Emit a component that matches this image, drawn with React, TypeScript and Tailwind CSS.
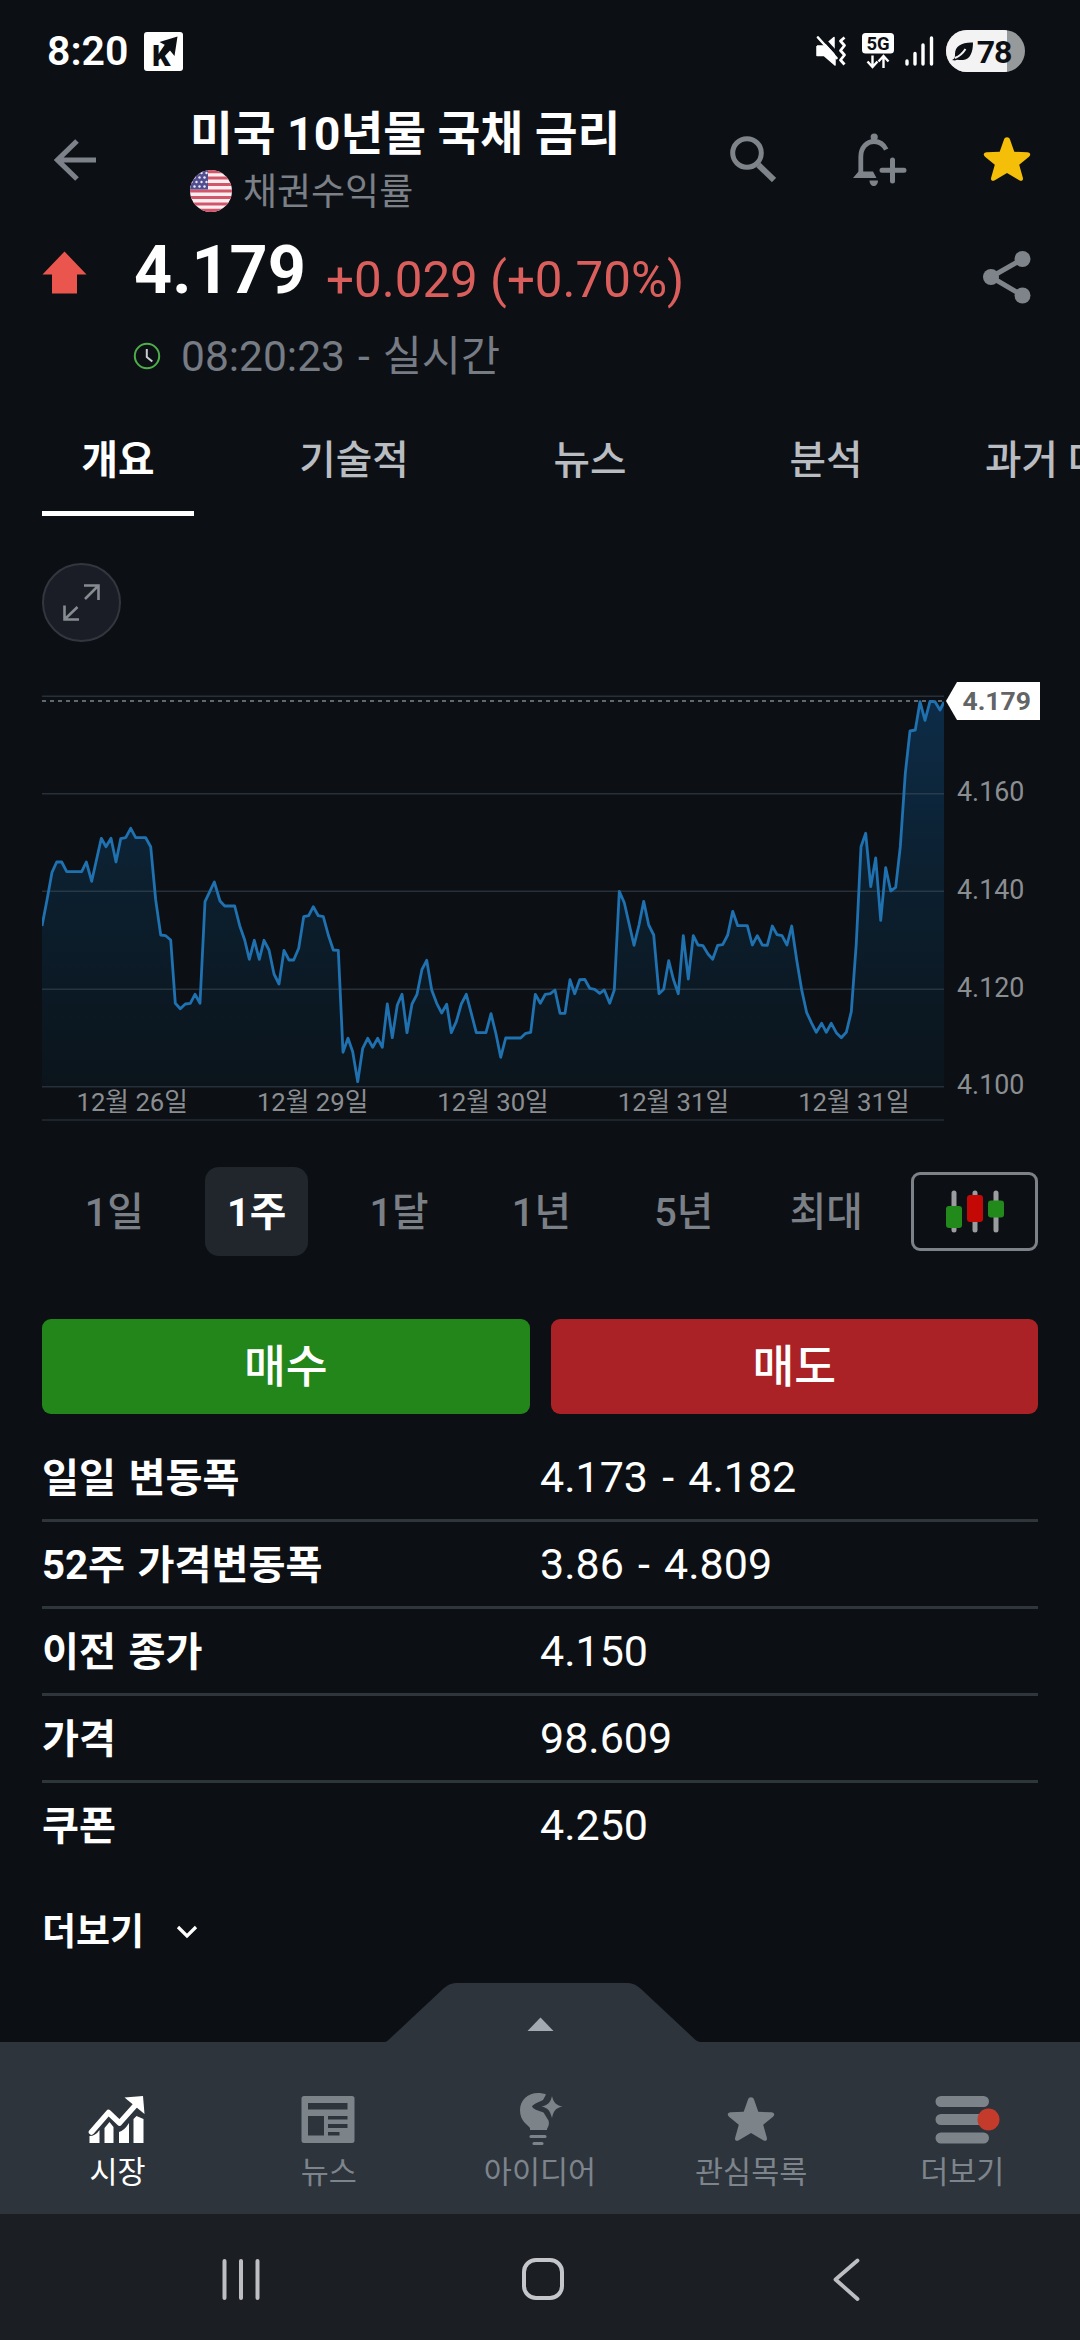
import type { ReactNode } from "react";

/* Price series for the week, in plot pixels (origin 42, 682). */
const SERIES: [number, number][] = [
  [42, 926], [47, 900], [52, 872.3], [56.7, 862], [61.7, 862], [66.7, 871.7], [81.7, 871.7], [86.3, 862], [91.7, 881.3],
  [101.3, 838.3], [106, 846.7], [111, 838.3], [116, 862], [120.7, 838.7], [125.7, 837.7], [130.7, 828.3], [135.7, 837.7],
  [145.7, 837.7], [150.7, 846.7], [155.7, 900], [160.7, 935], [165.7, 935.7], [170.7, 940], [175.3, 1003.3], [180.3, 1008.7],
  [185.3, 1004], [190.3, 1003.3], [195, 994.3], [200, 1003.3], [205, 901.7], [214.3, 882], [220, 901], [224.7, 906],
  [234.7, 906], [239.7, 925.7], [244.7, 940], [249.3, 959.3], [254.3, 940.3], [259.3, 959.3], [264, 940.3], [269, 950],
  [274, 974], [279, 984], [284, 950.3], [289, 960], [293.7, 960], [298.7, 948.3], [303.7, 916.7], [308.7, 915.7],
  [313.3, 906.7], [318.3, 915.7], [323.3, 916.7], [328.3, 935], [333.3, 950], [338.3, 950.3], [343, 1052.3], [348, 1038.3],
  [352.7, 1051.7], [357.7, 1081.7], [362.7, 1048.3], [367.7, 1038.3], [372.7, 1047.3], [377.7, 1038.3], [382.3, 1047.3],
  [387.3, 1004], [392.3, 1037.7], [397.3, 1005], [402, 994.3], [407, 1032.7], [412, 1004], [417, 994.3], [422, 969.3],
  [426.7, 960.3], [431.7, 990], [436.7, 1003.3], [441.7, 1013], [446.7, 1004.3], [451.3, 1032.7], [456.3, 1021.7],
  [461.3, 1004], [466.3, 994.3], [471.3, 1013.3], [476.3, 1032.7], [486, 1032.7], [491, 1013.7], [496, 1034], [500.7, 1057.3],
  [505.7, 1038], [520.7, 1038], [525.7, 1033.3], [530.7, 1032.3], [535.3, 994.3], [540.3, 1003.3], [545.3, 994.3],
  [550.3, 993.7], [555, 990], [560, 1013.3], [565, 1013.3], [570, 979.7], [574.7, 993.7], [579.7, 979.7], [584.7, 979.3],
  [589.7, 988.3], [594.7, 989.3], [599.7, 993.3], [604.3, 990], [609.7, 1003.3], [614.3, 990], [619.3, 891.3], [624.3, 902.7],
  [634, 945.3], [639, 925], [643.7, 901.3], [648.7, 925], [653.7, 935], [659, 993.7], [663.7, 989.3], [668.7, 960.7],
  [673.3, 979], [678.3, 993.7], [683.3, 935.7], [688.3, 979], [693.3, 935.7], [698, 945], [703, 945.7], [708, 954],
  [712.7, 959.3], [717.7, 945.3], [722.7, 944.7], [727.7, 935], [732.7, 911.3], [737.7, 925.7], [747.3, 925.7], [752.3, 945],
  [757.3, 935.7], [762.3, 945], [767.3, 945.3], [772.3, 926], [777, 934.7], [782, 935.7], [787, 945], [791.7, 926],
  [796.7, 960], [801.7, 990], [806.7, 1012.7], [811.7, 1023.3], [816.3, 1032.3], [821.7, 1023.3], [826.3, 1032.3],
  [831.3, 1023.3], [836.3, 1032.7], [841.3, 1037.7], [846.3, 1032.3], [851.3, 1011.7], [856.3, 943.3], [861, 846.7],
  [865.7, 833.3], [870.7, 886.7], [875.7, 858], [880.7, 920.3], [885.7, 867.7], [890.7, 891], [895.7, 887.3], [900.3, 846.7],
  [905.3, 773.3], [910, 731], [915.3, 730], [920, 701.7], [925, 720.3], [930, 701.3], [935, 701.7], [940, 710], [944, 702],
];
const LINE = SERIES.map(([x, y], i) => `${i ? "L" : "M"}${x} ${y}`).join("");
const AREA = `${LINE}V1086.5H42Z`;

const STAR =
  "M24 1.2c1.4 0 2.5.9 3 2.300l4.300 12.300 13 .5c3 .1 4 2.600 1.700 4.500l-9.800 8 3.600 12.700c.8 2.800-1.200 4.300-3.600 2.700L24 36.900 11.800 44.200c-2.400 1.600-4.400.1-3.600-2.700l3.600-12.700-9.800-8c-2.300-1.900-1.300-4.400 1.700-4.500l13-.5L21 3.500c.5-1.400 1.600-2.300 3-2.300z";

function StatusBar() {
  return (
    <div className="flex h-[100px] shrink-0 items-start justify-between pl-[47px] pr-[55px] pt-[30px]">
      <div className="flex h-[42px] items-center gap-[16px]">
        <span className="text-[41px] font-semibold leading-[42px] text-white">8:20</span>
        <svg className="h-[39px] w-[39px] overflow-visible" viewBox="0 0 39 39">
          <rect width="39" height="39" rx="3" fill="#fff" />
          <text x="8" y="34" fontFamily="Roboto" fontWeight="900" fontSize="29" fill="#0c1015">K</text>
          <path d="M33.500 4.500 30.500 24 26 18.500 19 26 15.500 21 21 13 15.500 10z" fill="#0c1015" />
        </svg>
      </div>
      <div className="flex h-[42px] items-center">
        <svg className="mr-[15px] h-[30px] w-[31px]" viewBox="0 0 31 30">
          <path d="M1 10h7l10-8.500V18M1 10v9.500h7L19 29V20" fill="#fff" stroke="#fff" strokeWidth="1.500" strokeLinejoin="round" />
          <path d="M8 10 18 2v17H8zM1 10h8v9.500H1zM8 19 19 29V18z" fill="#fff" />
          <path d="M2-3 25 22" stroke="#0c1015" strokeWidth="3.500" />
          <path d="M2 1.500 20.500 22" stroke="#fff" strokeWidth="2.600" strokeLinecap="round" />
          <path d="M28.500 1.500l-4 3.500 4 4.500-4 5 4 4.500-4 5 4 4.500" fill="none" stroke="#fff" strokeWidth="2.800" strokeLinejoin="round" />
        </svg>
        <svg className="mr-[11px] h-[36px] w-[32px]" viewBox="0 0 32 36">
          <rect width="32" height="20.500" rx="3.500" fill="#fff" />
          <text x="16" y="16.500" textAnchor="middle" fontFamily="Roboto" fontWeight="700" fontSize="18.500" fill="#0c1015">5G</text>
          <path d="M10.500 22.500v11M5.500 28.500l5 5.500 5-5.500M21.500 35V23.500M16.500 28.500l5-5.500 5 5.500" fill="none" stroke="#fff" strokeWidth="2.400" />
        </svg>
        <svg className="mr-[12px] h-[30px] w-[29px]" viewBox="0 0 29 30">
          <path d="M2 25v3M10 17.500V28M18 9v19M26.500 2v26" stroke="#fff" strokeWidth="3.400" strokeLinecap="round" />
        </svg>
        <svg className="h-[42px] w-[79px]" viewBox="0 0 79 42">
          <clipPath id="cell"><rect width="79" height="42" rx="21" /></clipPath>
          <g clipPath="url(#cell)">
            <rect width="79" height="42" fill="#979a9b" />
            <rect width="61" height="42" fill="#f3f3f3" />
          </g>
          <path d="M6 30c3-1 3-3 3-6 0-8 7-12 18-11.500 0 10-3 17-10 17.500-4 .3-6-1-8 .500z" fill="#0c1015" />
          <path d="M9 28c5-2 8-5 10.500-9" stroke="#f3f3f3" strokeWidth="2" fill="none" />
          <text x="48" y="33" textAnchor="middle" fontFamily="Roboto" fontWeight="700" fontSize="32" letterSpacing="-1" fill="#0c1015">78</text>
        </svg>
      </div>
    </div>
  );
}

function Flag() {
  return (
    <svg className="h-[42px] w-[42px]" viewBox="0 0 42 42">
      <clipPath id="disc"><circle cx="21" cy="21" r="21" /></clipPath>
      <g clipPath="url(#disc)">
        <rect width="42" height="42" fill="#fbeef0" />
        <path d="M0 1.600h42M0 8h42M0 14.500h42M0 21h42M0 27.500h42M0 34h42M0 40.400h42" stroke="#d2566a" strokeWidth="3.200" />
        <rect width="18" height="19.500" fill="#514e90" />
        <g fill="#eceaf6">
          {[3, 7.500, 12, 16.500].map((y, r) =>
            [1.500, 6.500, 11.500, 16.500].map((x) => <circle key={`${x}-${y}`} cx={x + (r % 2 ? -2 : 0)} cy={y} r="1.200" />),
          )}
        </g>
      </g>
    </svg>
  );
}

function Header() {
  return (
    <div className="flex h-[136px] shrink-0">
      <div className="w-[190px] pl-[54px] pt-[39px]">
        <svg className="h-[42px] w-[42px]" viewBox="0 0 42 42">
          <path d="M42 21H3M23 2 3.500 21 23 40" fill="none" stroke="#7d828a" strokeWidth="5.200" />
        </svg>
      </div>
      <div className="flex-1 pt-[8px]">
        <div className="whitespace-nowrap text-[46.500px] font-bold leading-[52px] text-white">미국 10년물 국채 금리</div>
        <div className="mt-[8px] flex h-[46px] items-center gap-[11px]">
          <Flag />
          <span className="pt-[4px] text-[37px] leading-[46px] text-[#7b7f86]">채권수익률</span>
        </div>
      </div>
      <div className="flex pr-[49px] pt-[33px]">
        <svg className="mr-[77px] mt-[3px] h-[46px] w-[46px]" viewBox="731 136 46 46">
          <circle cx="748" cy="153" r="14.300" fill="none" stroke="#7f848a" strokeWidth="5" />
          <path d="M759.500 165 775 180" stroke="#7f848a" strokeWidth="6" />
        </svg>
        <svg className="mr-[76px] h-[54px] w-[54px]" viewBox="854 133 54 54">
          <circle cx="875.200" cy="137" r="3.600" fill="#7f848a" />
          <path d="M861.800 175v-18c0-9.500 6-15.500 13.400-15.500 5.500 0 9.500 3 12 8" fill="none" stroke="#7f848a" strokeWidth="4.800" />
          <path d="M854 178l5.500-6.500H874l3.500 6.500zM870.500 180.500h8.500c0 3.500-2 5.500-4.200 5.500s-4.300-2-4.300-5.500z" fill="#7f848a" />
          <path d="M893.500 160v21M883 170.300h22" stroke="#7f848a" strokeWidth="5" strokeLinecap="round" />
        </svg>
        <svg className="mt-[3px] h-[47px] w-[48px]" viewBox="0 0 48 47"><path d={STAR} fill="#f5be08" /></svg>
      </div>
    </div>
  );
}

function Quote() {
  return (
    <div className="h-[164px] shrink-0">
      <div className="flex h-[74px]">
        <svg className="ml-[42px] mt-[15px] h-[43px] w-[45px]" viewBox="0 0 45 43">
          <path d="M22.500.5 44.500 23.500H35V42.500H10V23.500H.5z" fill="#ea564e" />
        </svg>
        <span className="ml-[47px] w-[192px] text-[66.500px] font-bold leading-[68px] text-white">4.179</span>
        <span className="mt-[10px] text-[49.300px] leading-[68px] text-[#da5f5c]">+0.029 (+0.70%)</span>
        <svg className="ml-auto mr-[49px] mt-[14px] h-[54px] w-[49px]" viewBox="0 0 49 54">
          <path d="M40.500 9 9 27 40.500 45.500" fill="none" stroke="#7f848a" strokeWidth="5" />
          <circle cx="40.500" cy="9" r="8" fill="#7f848a" />
          <circle cx="9" cy="27" r="8" fill="#7f848a" />
          <circle cx="40.500" cy="45.500" r="8" fill="#7f848a" />
        </svg>
      </div>
      <div className="flex h-[92px] items-center pl-[133px]">
        <svg className="mr-[20px] h-[28px] w-[28px]" viewBox="0 0 28 28">
          <circle cx="14" cy="14" r="12.200" fill="none" stroke="#4fae4a" strokeWidth="2" />
          <path d="M13.800 7v8l5.500 4.500" fill="none" stroke="#c9ccd0" strokeWidth="2" />
        </svg>
        <span className="pt-[1px] text-[42.500px] leading-[50px] text-[#767b84] [word-spacing:2.5px]">08:20:23 - 실시간</span>
      </div>
    </div>
  );
}

function Tabs() {
  return (
    <div className="flex h-[116px] shrink-0 overflow-hidden">
      {["개요", "기술적", "뉴스", "분석"].map((t, i) => (
        <div key={t} className="flex w-[236px] shrink-0 flex-col items-center justify-between pt-[39px]">
          <span className={`text-[39.700px] leading-[44px] ${i ? "font-medium text-[#b9bcc1]" : "font-bold text-white"}`}>{t}</span>
          {i === 0 && <span className="h-[5px] w-[152px] bg-white" />}
        </div>
      ))}
      <span className="ml-[41px] shrink-0 whitespace-nowrap pt-[39px] text-[39.700px] font-medium leading-[44px] text-[#b9bcc1]">과거 데이터</span>
    </div>
  );
}

function Chart() {
  return (
    <div className="mt-[40px] flex h-[440px] shrink-0 pl-[42px]">
      <div className="w-[902px]">
        <svg className="block h-[406px] w-[902px]" viewBox="42 682 902 406">
          <defs>
            <linearGradient id="fade" gradientUnits="userSpaceOnUse" x1="0" y1="696" x2="0" y2="1087">
              <stop offset="0" stopColor="#0d2c48" />
              <stop offset=".45" stopColor="#0c2030" />
              <stop offset="1" stopColor="#0b141b" />
            </linearGradient>
          </defs>
          <path d={AREA} fill="url(#fade)" />
          <path d="M42 696.300h902M42 793.700h902M42 891.300h902M42 989.300h902M42 1086.700h902" stroke="#4a5664" strokeOpacity=".45" strokeWidth="1.600" />
          <path d="M42 701h902" stroke="#7e858c" strokeWidth="1.600" strokeDasharray="4 4" />
          <path d={LINE} fill="none" stroke="#1f71b0" strokeWidth="2.800" strokeLinejoin="round" />
        </svg>
        <div className="flex h-[33px] border-b-2 border-[#1e242b]">
          {["26", "29", "30", "31", "31"].map((d, i) => (
            <span key={i} className="flex-1 text-center text-[25.700px] leading-[28px] text-[#8b8e91]">12월 {d}일</span>
          ))}
        </div>
      </div>
      <div className="w-[96px]">
        <div className="ml-[2px] flex h-[38px] w-[94px] items-center justify-end bg-white pr-[9px] text-[26.500px] font-bold leading-none text-[#626466] [clip-path:polygon(0_50%,11px_0,100%_0,100%_100%,11px_100%)]">
          4.179
        </div>
        <div className="mt-[23px] pl-[13px] text-[26.800px] text-[#8b8e91]">
          {["4.160", "4.140", "4.120", "4.100"].map((v) => (
            <div key={v} className="h-[97.800px] leading-[98px]">{v}</div>
          ))}
        </div>
      </div>
    </div>
  );
}

function Ranges() {
  return (
    <div className="mt-[45px] flex h-[89px] shrink-0 items-center pl-[43px] pr-[42px]">
      {["1일", "1주", "1달", "1년", "5년", "최대"].map((r) => (
        <div key={r} className="flex w-[142.400px] justify-center">
          {r === "1주" ? (
            <span className="h-[89px] w-[103px] rounded-[14px] bg-[#20262b] text-center text-[39.700px] font-bold leading-[92px] text-white">{r}</span>
          ) : (
            <span className="h-[89px] text-[39.700px] font-medium leading-[92px] text-[#7b7f86]">{r}</span>
          )}
        </div>
      ))}
      <div className="ml-auto flex h-[79px] w-[127px] items-center justify-center rounded-[9px] border-[3px] border-[#7c8288]">
        <svg className="h-[43px] w-[58px]" viewBox="0 0 58 43">
          <path d="M8 3v37M29 3v37M50 3v37" stroke="#9a9c9e" strokeWidth="5" strokeLinecap="round" />
          <rect y="16" width="16" height="22" rx="3" fill="#218a1b" />
          <rect x="21" y="5" width="16" height="27" rx="3" fill="#c40806" />
          <rect x="42" y="10.500" width="16" height="17" rx="3" fill="#218a1b" />
        </svg>
      </div>
    </div>
  );
}

const ROWS: [string, string][] = [
  ["일일 변동폭", "4.173 - 4.182"],
  ["52주 가격변동폭", "3.86 - 4.809"],
  ["이전 종가", "4.150"],
  ["가격", "98.609"],
  ["쿠폰", "4.250"],
];

function Stats() {
  return (
    <div className="mx-[42px] mt-[21px] shrink-0">
      {ROWS.map(([k, v], i) => (
        <div key={k} className={`flex h-[87px] items-center border-b-[3px] ${i === 4 ? "border-transparent" : "border-[#2e353b]"}`}>
          <span className="w-[498px] pt-[4px] text-[40.200px] font-bold text-white [word-spacing:2.5px]">{k}</span>
          <span className="text-[43px] text-white [word-spacing:3.5px]">{v}</span>
        </div>
      ))}
      <div className="mt-[37px] flex h-[50px] items-center text-[37px] font-bold text-white">
        <span className="pt-[2px]">더보기</span>
        <svg className="ml-[32px] h-[14px] w-[22px]" viewBox="0 0 22 14"><path d="M2 2l9 9 9-9" fill="none" stroke="#fff" strokeWidth="3.200" /></svg>
      </div>
    </div>
  );
}

function NavItem({ label, active, children }: { label: string; active?: boolean; children: ReactNode }) {
  return (
    <div className="flex w-[211.200px] flex-col items-center">
      <svg className="h-[56px] w-[80px]" viewBox="-40 0 80 56">{children}</svg>
      <span className={`mt-[5px] text-[30.500px] leading-[40px] ${active ? "text-white" : "text-[#7e848b]"}`}>{label}</span>
    </div>
  );
}

function BottomNav() {
  const g = "#7c8389";
  return (
    <div className="mt-auto shrink-0">
      <svg className="ml-[383px] block h-[59px] w-[322px]" viewBox="382 0 322 59">
        <path d="M382 59c3 0 4-.5 6-2.500L442 6c5-4.500 9-6 15-6H625c6 0 10 1.500 15 6l54 50.500c2 2 4 2.500 8 2.500z" fill="#2d343c" />
        <path d="M539.500 34.500 552.500 48H526.500z" fill="#a4aab1" />
      </svg>
      <div className="flex h-[172px] bg-[#2d343c] px-[12px] pt-[50px]">
        <NavItem label="시장" active>
          <g fill="#fff" transform="translate(-29.500 4)">
            <path d="M1 40q6 0 10-6V47H1zM16 32l5-6 4 5V47H16zM30.500 36q5-1 10-9V47H30.500zM45 23l3-3 7 3V47H45z" />
            <path d="M3 36 20 16.500 31 27 48 8" fill="none" stroke="#fff" strokeWidth="5.600" strokeLinecap="round" strokeLinejoin="round" />
            <path d="M36 1.500 54.500 0 56 18z" />
          </g>
        </NavItem>
        <NavItem label="뉴스">
          <g transform="translate(-27.500 4)">
            <rect width="53" height="47" rx="2.500" fill={g} />
            <path d="M6.500 7H46V13.500H6.500zM6.500 20H22.500V39.500H6.500zM26.500 20H46v3.500H26.500zM26.500 28H46v4H26.500zM26.500 36H38v3.500H26.500z" fill="#2d343c" />
          </g>
        </NavItem>
        <NavItem label="아이디어">
          <g transform="translate(-20 1)" fill={g}>
            <path d="M18 0c3 0 6 .5 8 1.500L23 7c-4 2-9.500 4-11 6.500 1.500 3 6.500 4 11.500 6l5 8c1 4 0 5.500-1.500 8.500v1H10v-2C7 31 0 28 0 17 0 7 8 0 18 0z" />
            <path d="M32 3c1.500 6.500 4 9 10.500 10.500C36 15 33.500 17.500 32 25c-2-7.500-4-10-10.500-11.500C28 12 30.500 9.500 32 3z" />
            <path d="M11 43.500H25M14 50.500h8" stroke={g} strokeWidth="3.200" strokeLinecap="round" />
          </g>
        </NavItem>
        <NavItem label="관심목록">
          <path d={STAR} fill={g} transform="translate(-24 4)" />
        </NavItem>
        <NavItem label="더보기">
          <path d="M-21 9.500H21.500M-21 27.500H21.500M-21 46H21.500" stroke={g} strokeWidth="11" strokeLinecap="round" />
          <circle cx="26.500" cy="27.500" r="11" fill="#c43a2b" />
        </NavItem>
      </div>
      <div className="flex h-[126px] bg-[#1b1f23] pt-[44px]">
        <svg className="ml-[220px] h-[42px] w-[42px]" viewBox="0 0 42 42">
          <path d="M4.500 3v37M21 3v37M37.500 3v37" stroke="#bcbec2" strokeWidth="4" strokeLinecap="round" />
        </svg>
        <svg className="ml-[260px] h-[42px] w-[42px]" viewBox="0 0 42 42">
          <rect x="2" y="2" width="38" height="38" rx="12" fill="none" stroke="#c4c6c9" strokeWidth="4" />
        </svg>
        <svg className="ml-[268px] h-[44px] w-[30px]" viewBox="0 0 30 44">
          <path d="M25.500 2.500 3.500 21.500 25.500 41" fill="none" stroke="#bcbec2" strokeWidth="3.800" strokeLinecap="round" strokeLinejoin="round" />
        </svg>
      </div>
    </div>
  );
}

export default function App() {
  return (
    <div className="flex h-[2340px] w-[1080px] flex-col overflow-hidden bg-[#0c1015] [font-family:Roboto,'Noto_Sans_CJK_KR',sans-serif]">
      <StatusBar />
      <Header />
      <Quote />
      <Tabs />
      <div className="ml-[42px] mt-[47px] h-[79px] w-[79px] shrink-0 rounded-full border-2 border-[#33363e] bg-[#1a1d25]">
        <svg className="h-[75px] w-[75px]" viewBox="44 565 75 75">
          <path d="M84 585.500H98.500V600M98 586 85 599M64.500 605.500V619.500H79M65 619 77.500 607" fill="none" stroke="#868a91" strokeWidth="2.600" />
        </svg>
      </div>
      <Chart />
      <Ranges />
      <div className="mt-[63px] flex h-[95px] shrink-0 gap-[21px] px-[42px] text-[45.500px] font-medium leading-[98px] text-white">
        <div className="flex-1 rounded-[9px] bg-[#23861a] text-center">매수</div>
        <div className="flex-1 rounded-[9px] bg-[#aa2225] text-center">매도</div>
      </div>
      <Stats />
      <BottomNav />
    </div>
  );
}
